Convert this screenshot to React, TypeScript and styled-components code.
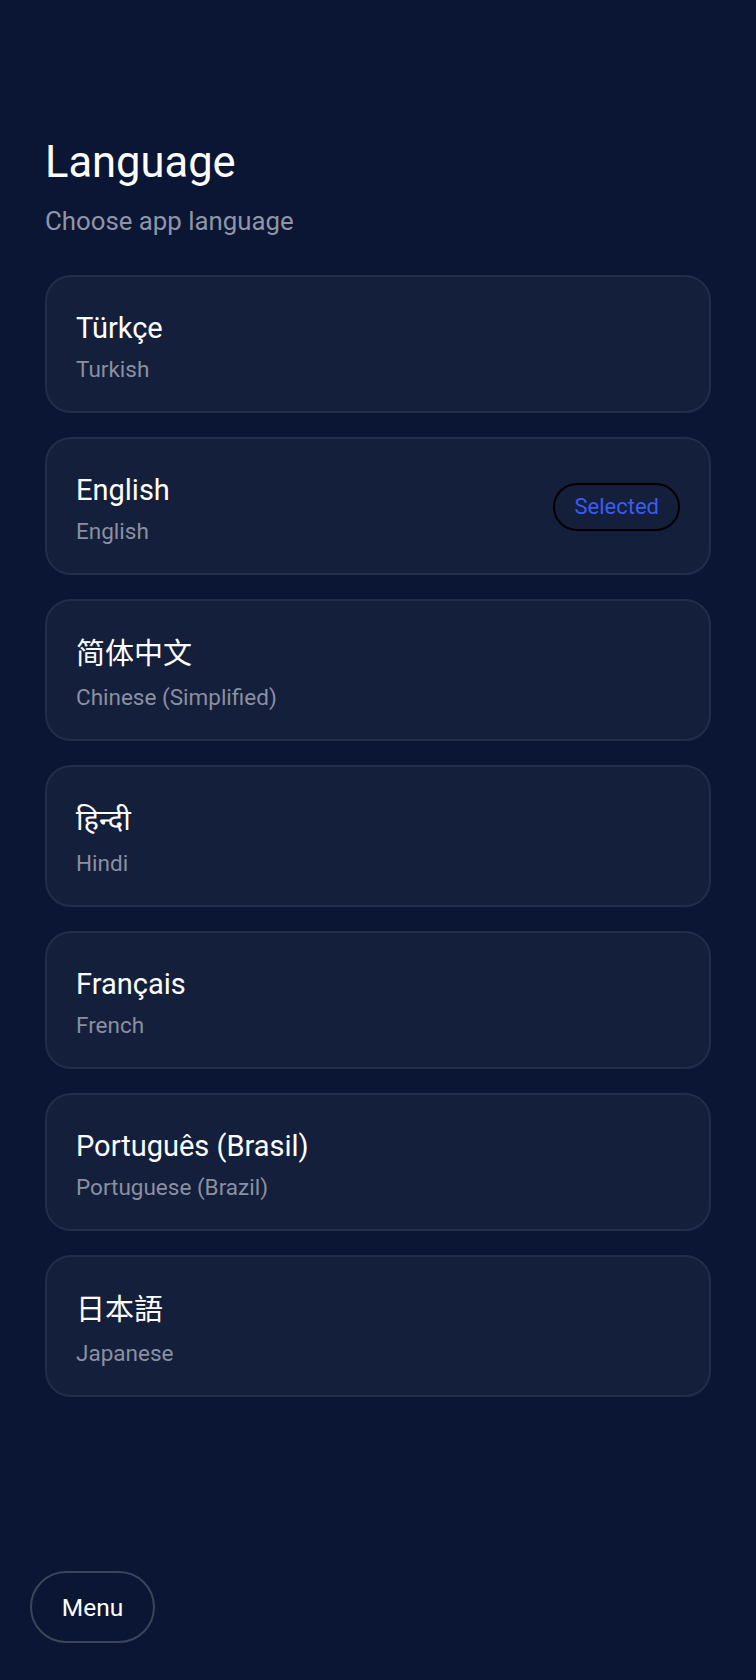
import React from "react";
import styled, { createGlobalStyle } from "styled-components";

const GlobalStyle = createGlobalStyle`
  html, body {
    margin: 0;
    padding: 0;
    background: #0b1634;
  }
  body {
    font-family: Roboto, "Noto Sans", "Noto Sans CJK SC", "Noto Sans CJK JP", sans-serif;
    color: #ffffff;
  }
  * { box-sizing: border-box; }
`;

const Page = styled.div`
  min-height: 1680px;
  display: flex;
  flex-direction: column;
  background: #0b1634;
  padding: 0 45px 37px 45px;
`;

const Header = styled.header`
  display: flex;
  flex-direction: column;
  padding-top: 137px;
`;

const Title = styled.h1`
  margin: 0;
  font-size: 43.5px;
  line-height: 52px;
  font-weight: 400;
  color: #ffffff;
`;

const Subtitle = styled.p`
  margin: 16px 0 0 0;
  font-size: 25.8px;
  line-height: 32px;
  font-weight: 400;
  color: #8f95a6;
`;

const List = styled.div`
  display: flex;
  flex-direction: column;
  gap: 24px;
  margin-top: 38px;
`;

const Card = styled.div`
  display: flex;
  align-items: center;
  justify-content: space-between;
  background: #141f3c;
  border: 2px solid #222d4a;
  border-radius: 26px;
  padding: 31px 29px 30px 29px;
`;

const Texts = styled.div`
  display: flex;
  flex-direction: column;
  gap: 9px;
`;

const Name = styled.div<{ $tall?: boolean }>`
  font-size: 29px;
  line-height: ${(p) => (p.$tall ? "44px" : "40px")};
  color: #ffffff;
`;

const Native = styled.div`
  font-size: 22.5px;
  line-height: 24px;
  color: #8a90a1;
`;

const Badge = styled.span`
  display: inline-flex;
  align-items: center;
  justify-content: center;
  height: 48px;
  padding: 0 19px;
  border: 2px solid #000000;
  border-radius: 24px;
  font-size: 22px;
  color: #3a5cf2;
`;

const Footer = styled.div`
  margin-top: auto;
  margin-left: -15px;
  display: flex;
`;

const MenuButton = styled.button`
  height: 72px;
  width: 125px;
  border-radius: 36px;
  border: 2px solid #3b4459;
  background: transparent;
  color: #ffffff;
  font-family: Roboto, sans-serif;
  font-size: 24.5px;
  cursor: pointer;
`;

const languages = [
  { name: "Türkçe", en: "Turkish" },
  { name: "English", en: "English", selected: true },
  { name: "简体中文", en: "Chinese (Simplified)", tall: true },
  { name: "हिन्दी", en: "Hindi", tall: true },
  { name: "Français", en: "French" },
  { name: "Português (Brasil)", en: "Portuguese (Brazil)" },
  { name: "日本語", en: "Japanese", tall: true },
];

export default function App() {
  return (
    <>
      <GlobalStyle />
      <Page>
        <Header>
          <Title>Language</Title>
          <Subtitle>Choose app language</Subtitle>
        </Header>
        <List>
          {languages.map((l) => (
            <Card key={l.name}>
              <Texts>
                <Name $tall={l.tall}>{l.name}</Name>
                <Native>{l.en}</Native>
              </Texts>
              {l.selected && <Badge>Selected</Badge>}
            </Card>
          ))}
        </List>
        <Footer>
          <MenuButton>Menu</MenuButton>
        </Footer>
      </Page>
    </>
  );
}
